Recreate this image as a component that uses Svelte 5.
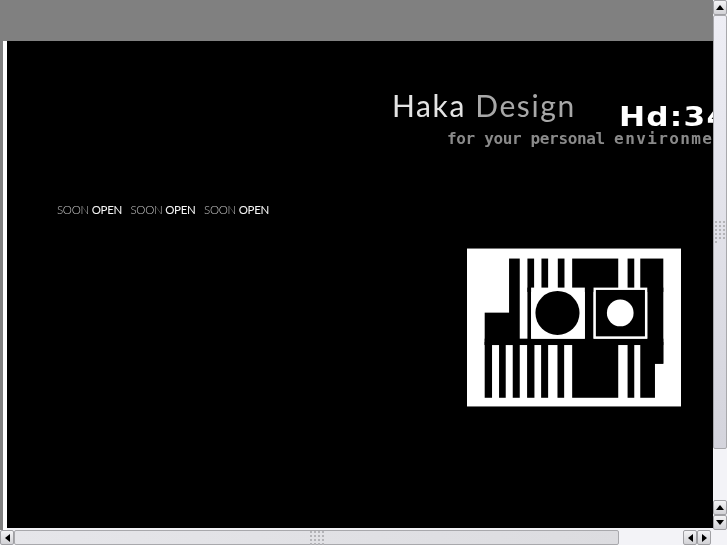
<!--
  App.svelte — Haka Design "soon open" splash inside a framed browser viewport.
-->
<script lang="ts">
  const notices = ['SOON', 'SOON', 'SOON'];
  const gripDots = Array.from({ length: 16 });

  // logo blocks as [x, y, w, h], traced in the svg's own 3x coordinates
  const blocks = [
    [148, 55, 32, 259],
    [203, 55, 20, 100],
    [203, 142, 11, 160],
    [245, 55, 20, 100],
    [294, 55, 20, 100],
    [337, 55, 138, 100],
    [375, 142, 26, 160],
    [503, 55, 20, 100],
    [541, 55, 69, 100],
    [562, 142, 48, 228],
    [75, 217, 77, 97],
    [75, 295, 535, 19],
    [75, 305, 22, 167],
    [118, 305, 20, 167],
    [159, 305, 21, 167],
    [202, 305, 22, 167],
    [244, 305, 21, 167],
    [293, 305, 20, 167],
    [337, 305, 138, 167],
    [503, 305, 20, 167],
    [541, 305, 44, 167],
    [580, 305, 30, 65]
  ];
</script>

<div class="window">
  <div class="viewport">
    <div class="top-band"></div>
    <div class="frame">
      <div class="edge"></div>
      <main class="stage">
        <header class="brand">
          <div class="brand-row">
            <h1 class="title">Haka <span>Design</span></h1>
            <div class="mark">Hd:34</div>
          </div>
          <p class="tagline">for your personal <span>environment</span></p>
        </header>

        <div class="body-row">
          <ul class="notices">
            {#each notices as word}
              <li>{word} <b>OPEN</b></li>
            {/each}
          </ul>
          <svg class="logo" viewBox="22 25 641 473" width="214" height="159" aria-label="Haka Design logo">
            <rect x="22" y="25" width="641" height="473" fill="#fff" />
            {#each blocks as [x, y, w, h]}
              <rect {x} {y} width={w} height={h} fill="#000" />
            {/each}
            <rect x="214" y="142" width="161" height="153" fill="#fff" />
            <circle cx="293" cy="218" r="66" fill="#000" />
            <rect x="401" y="142" width="161" height="153" fill="#fff" />
            <rect x="408" y="149" width="147" height="139" fill="#000" />
            <circle cx="481" cy="218" r="40" fill="#fff" />
          </svg>
        </div>
      </main>
    </div>
  </div>

  <aside class="vbar">
    <button class="btn" aria-label="Scroll up"><i class="tri up"></i></button>
    <div class="thumb vthumb">
      <div class="grip">{#each gripDots as _}<i></i>{/each}</div>
    </div>
    <div class="spacer"></div>
    <button class="btn" aria-label="Scroll up"><i class="tri up"></i></button>
    <button class="btn" aria-label="Scroll down"><i class="tri down"></i></button>
  </aside>

  <footer class="hbar">
    <button class="btn" aria-label="Scroll left"><i class="tri left"></i></button>
    <div class="thumb hthumb">
      <div class="grip">{#each gripDots as _}<i></i>{/each}</div>
    </div>
    <div class="spacer"></div>
    <button class="btn" aria-label="Scroll left"><i class="tri left"></i></button>
    <button class="btn" aria-label="Scroll right"><i class="tri right"></i></button>
    <div class="corner"></div>
  </footer>
</div>

<style>
  :global(body) {
    margin: 0;
    background: #f3f3f7;
    overflow: hidden;
  }

  .window {
    width: 727px;
    height: 545px;
    display: grid;
    grid-template-columns: 713px 14px;
    grid-template-rows: 530px 15px;
    background: #f3f3f7;
  }

  .viewport {
    display: flex;
    flex-direction: column;
    overflow: hidden;
  }

  .top-band {
    height: 41px;
    flex: none;
    background: #808080;
  }

  .frame {
    flex: 1;
    display: flex;
    min-height: 0;
  }

  .edge {
    width: 3px;
    background: #808080;
    border-right: 4px solid #fff;
  }

  .stage {
    flex: 1;
    height: 487px;
    background: #000;
    overflow: hidden;
    min-width: 0;
    border-bottom: 2px solid #f3f3f7;
  }

  .brand {
    padding: 46px 0 0 385px;
    white-space: nowrap;
  }

  .brand-row {
    display: flex;
    align-items: flex-end;
    height: 36px;
  }

  .title {
    margin: 0;
    font: 400 30px/36px Lato, sans-serif;
    color: #e4e4e4;
    letter-spacing: 1.6px;
    width: 227px;
    flex: none;
    filter: blur(0.3px);
  }

  .title span {
    color: #a8a8a8;
  }

  .mark {
    margin-bottom: -4px;
    font: 700 26px/20px "DejaVu Sans", sans-serif;
    color: #fff;
    letter-spacing: 1px;
    transform: scaleX(1.2);
    transform-origin: left center;
    filter: blur(0.3px);
  }

  .tagline {
    margin: 5px 0 0 55px;
    font: 700 16px/21px "DejaVu Sans Mono", monospace;
    color: #8a8a8a;
    letter-spacing: -0.35px;
    filter: blur(0.3px);
  }

  .tagline span {
    letter-spacing: 1.4px;
  }

  .body-row {
    display: flex;
    align-items: flex-start;
    padding-top: 54px;
  }

  .notices {
    list-style: none;
    margin: 0;
    padding: 0 0 0 50px;
    width: 410px;
    flex: none;
    box-sizing: border-box;
    display: flex;
    gap: 8.5px;
    font: 300 11.5px/14px Lato, sans-serif;
    color: #c4c4c4;
    letter-spacing: -0.3px;
    filter: blur(0.25px);
  }

  .notices b {
    font-weight: 400;
    letter-spacing: -0.3px;
    color: #f6f6f6;
  }

  .logo {
    margin: 45px 0 0 50px;
    flex: none;
    filter: blur(0.35px);
  }

  .vbar {
    display: flex;
    flex-direction: column;
  }

  .hbar {
    grid-column: 1 / 3;
    display: flex;
  }

  .spacer {
    flex: 1;
  }

  .corner {
    width: 16px;
  }

  .btn {
    width: 14px;
    height: 15px;
    padding: 0;
    flex: none;
    display: flex;
    align-items: center;
    justify-content: center;
    background: linear-gradient(#f4f4f6, #d2d2d6);
    border: 1px solid #a0a0a4;
    border-radius: 2px;
  }

  .tri {
    width: 0;
    height: 0;
    border: 4px solid transparent;
  }

  .tri.up {
    border-top: 0;
    border-bottom: 5px solid #000;
  }

  .tri.down {
    border-bottom: 0;
    border-top: 5px solid #000;
  }

  .tri.left {
    border-left: 0;
    border-right: 5px solid #000;
  }

  .tri.right {
    border-right: 0;
    border-left: 5px solid #000;
  }

  .thumb {
    box-sizing: border-box;
    display: flex;
    align-items: center;
    justify-content: center;
    border: 1px solid #a8a8ac;
    border-radius: 2px;
  }

  .vthumb {
    width: 14px;
    height: 434px;
    background: linear-gradient(#eeeef5, #d4d4dc);
  }

  .hthumb {
    width: 605px;
    height: 15px;
    background: linear-gradient(90deg, #e6e6ea, #dcdce0);
  }

  .grip {
    display: grid;
    grid-template-columns: repeat(4, 2px);
    gap: 2px;
  }

  .vthumb .grip {
    grid-template-columns: repeat(3, 2px);
  }

  .grip i {
    width: 2px;
    height: 2px;
    background: #b4b4b8;
  }
</style>
